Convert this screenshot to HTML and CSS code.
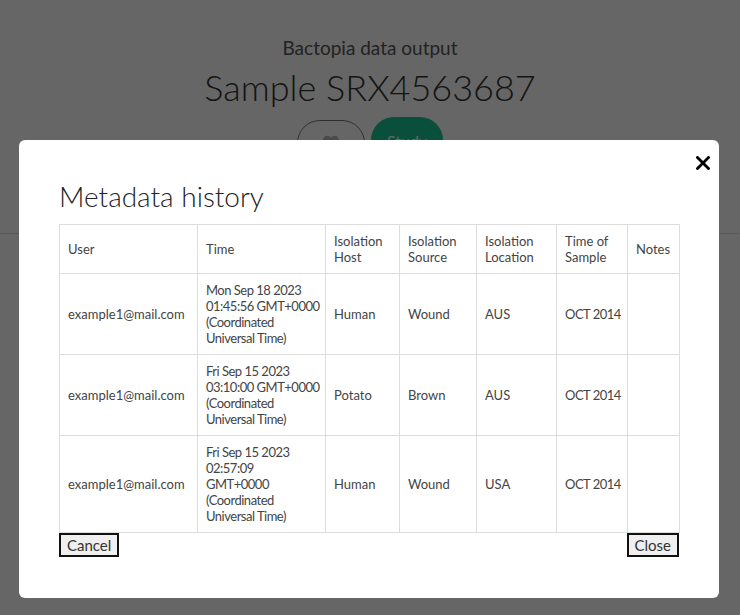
FILE: index.html
```html
<!DOCTYPE html>
<html lang="en">
<head>
<meta charset="utf-8">
<title>Sample SRX4563687</title>
<link rel="stylesheet" href="styles.css">
</head>
<body>
<div class="page">
  <header class="page-head">
    <div class="subtitle">Bactopia data output</div>
    <h1 class="title">Sample SRX4563687</h1>
    <div class="actions">
      <button class="pill pill-outline" aria-label="Favourite">
        <svg width="18" height="16" viewBox="0 0 24 22"><path d="M12 21 C5 15 1 11.5 1 7 C1 3.5 3.5 1 6.8 1 C9 1 10.8 2.2 12 4 C13.2 2.2 15 1 17.2 1 C20.5 1 23 3.5 23 7 C23 11.5 19 15 12 21 Z" fill="#bbb"/></svg>
      </button>
      <button class="pill pill-green">Study</button>
    </div>
  </header>
  <div class="rule"></div>
</div>

<div class="overlay">
  <div class="modal">
    <button class="modal-x" aria-label="Close">
      <svg width="14" height="14" viewBox="0 0 14 14"><path d="M1.5 1.5 L12.5 12.5 M12.5 1.5 L1.5 12.5" stroke="#000" stroke-width="2.8" stroke-linecap="square"/></svg>
    </button>
    <h2 class="modal-title">Metadata history</h2>
    <table class="history">
      <colgroup>
        <col class="c-user"><col class="c-time"><col class="c-host"><col class="c-src"><col class="c-loc"><col class="c-tos"><col class="c-notes">
      </colgroup>
      <thead>
        <tr>
          <th>User</th>
          <th>Time</th>
          <th>Isolation<br>Host</th>
          <th>Isolation<br>Source</th>
          <th>Isolation<br>Location</th>
          <th>Time of<br>Sample</th>
          <th>Notes</th>
        </tr>
      </thead>
      <tbody>
        <tr>
          <td>example1@mail.com</td>
          <td class="time">Mon Sep 18 2023<br>01:45:56 GMT+0000<br>(Coordinated<br>Universal Time)</td>
          <td>Human</td>
          <td>Wound</td>
          <td>AUS</td>
          <td class="time">OCT 2014</td>
          <td></td>
        </tr>
        <tr>
          <td>example1@mail.com</td>
          <td class="time">Fri Sep 15 2023<br>03:10:00 GMT+0000<br>(Coordinated<br>Universal Time)</td>
          <td>Potato</td>
          <td>Brown</td>
          <td>AUS</td>
          <td class="time">OCT 2014</td>
          <td></td>
        </tr>
        <tr>
          <td>example1@mail.com</td>
          <td class="time">Fri Sep 15 2023<br>02:57:09<br>GMT+0000<br>(Coordinated<br>Universal Time)</td>
          <td>Human</td>
          <td>Wound</td>
          <td>USA</td>
          <td class="time">OCT 2014</td>
          <td></td>
        </tr>
      </tbody>
    </table>
    <div class="modal-foot">
      <button class="btn">Cancel</button>
      <button class="btn">Close</button>
    </div>
  </div>
</div>
</body>
</html>
```

FILE: styles.css
```css
html, body {
  margin: 0;
  padding: 0;
  background: #fff;
  font-family: Lato, "Open Sans", "Liberation Sans", sans-serif;
  color: #333;
}

.page {
  min-height: 615px;
}

.page-head {
  display: flex;
  flex-direction: column;
  align-items: center;
  padding-top: 36px;
}

.subtitle {
  font-size: 19px;
  line-height: 24px;
  color: #555;
}

.title {
  margin: 4px 0 0;
  font-size: 36px;
  line-height: 46px;
  font-weight: 300;
  color: #333;
}

.actions {
  display: flex;
  gap: 6px;
  margin-top: 10px;
}

.pill {
  height: 46px;
  border-radius: 23px;
  font-family: inherit;
  font-size: 16px;
  display: flex;
  align-items: center;
  justify-content: center;
}

.pill-outline {
  width: 68px;
  background: #fff;
  border: 1px solid #777;
}

.pill-green {
  width: 72px;
  margin-top: -3px;
  background: #19c596;
  border: none;
  color: #fff;
  padding-top: 2px;
}

.rule {
  margin-top: 67px;
  height: 1px;
  background: #ddd;
}

.overlay {
  position: fixed;
  inset: 0;
  background: rgba(0, 0, 0, 0.6);
  padding: 140px 0 0 19px;
}

.modal {
  position: relative;
  width: 620px;
  background: #fff;
  border-radius: 6px;
  padding: 20px 40px 41px;
}

.modal-x {
  position: absolute;
  top: 14px;
  right: 7px;
  width: 18px;
  height: 18px;
  padding: 0;
  border: none;
  background: none;
  display: flex;
  align-items: center;
  justify-content: center;
}

.modal-title {
  margin: 20px 0 12px;
  font-size: 28px;
  line-height: 32px;
  font-weight: 300;
  color: #222;
}

.history {
  width: 620px;
  table-layout: fixed;
  border-collapse: collapse;
  font-size: 13px;
  line-height: 16px;
  color: #444;
}

.c-user { width: 138px; }
.c-time { width: 128px; }
.c-host { width: 74px; }
.c-src { width: 77px; }
.c-loc { width: 80px; }
.c-tos { width: 71px; }
.c-notes { width: 52px; }

.history th,
.history td {
  border: 1px solid #ddd;
  padding: 8px 8px;
  text-align: left;
  vertical-align: middle;
  font-weight: 400;
  white-space: nowrap;
}

.history td.time {
  letter-spacing: -0.5px;
}

.history th {
  height: 32px;
}

.modal-foot {
  display: flex;
  justify-content: space-between;
}

.btn {
  font-family: inherit;
  font-size: 15px;
  line-height: 18px;
  padding: 1px 6px 1px;
  border: 2px solid #111;
  background: #efefef;
  color: #333;
  height: 24px;
}
```
